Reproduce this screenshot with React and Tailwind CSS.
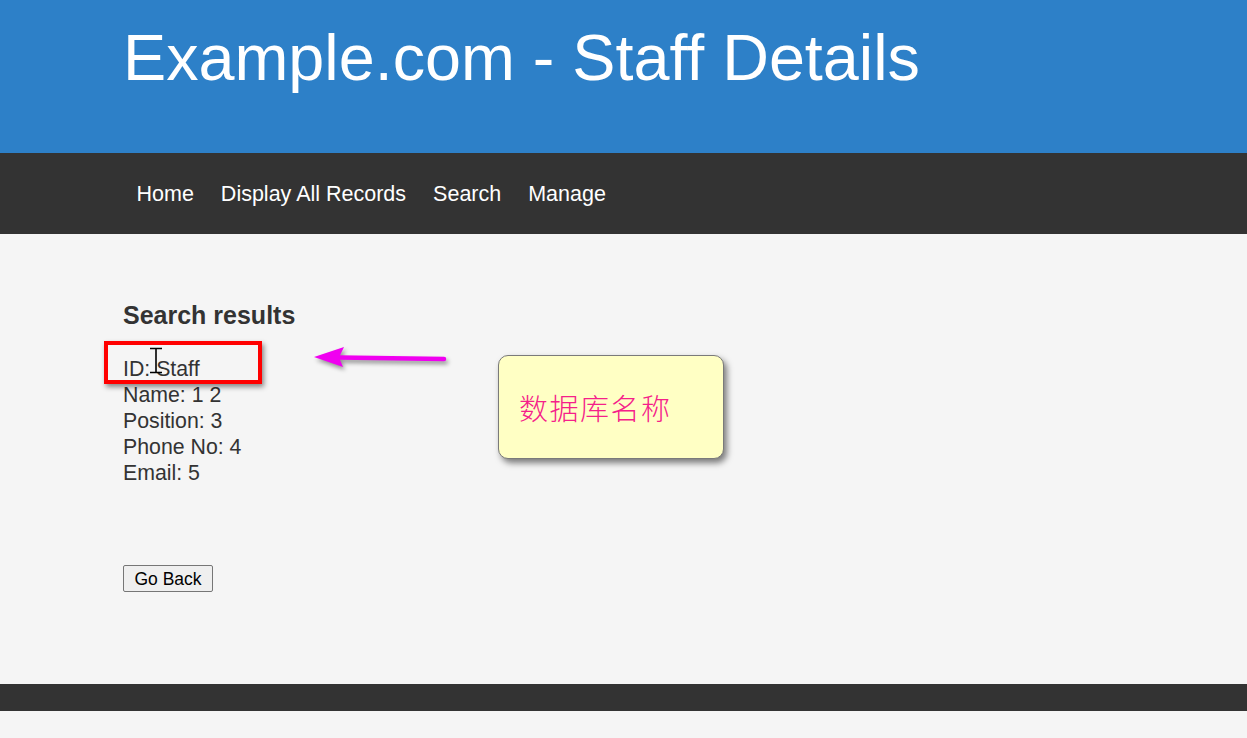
import React from "react";

export default function App() {
  const sans = { fontFamily: '"Liberation Sans", Arial, sans-serif' };
  return (
    <div className="relative min-h-[738px] bg-[#f5f5f5]" style={sans}>
      <header className="h-[153px] bg-[#2d80c8]">
        <div className="mx-auto w-[1001px] pt-[26px]">
          <h1 className="text-[64.7px] leading-[64px] text-white font-normal">Example.com - Staff Details</h1>
        </div>
      </header>
      <nav className="h-[81px] bg-[#333333]">
        <div className="mx-auto flex h-full w-[1001px] items-center">
          {["Home", "Display All Records", "Search", "Manage"].map((t) => (
            <a key={t} className="px-[13.5px] text-[21.5px] leading-[26px] text-white">{t}</a>
          ))}
        </div>
      </nav>
      <main className="h-[450px]">
        <div className="mx-auto w-[1001px] pt-[66px] text-[#333333]">
          <h2 className="text-[25px] leading-[30px] font-bold">Search results</h2>
          <div className="mt-[26px] text-[21.3px] leading-[26px]">
            <div>ID: Staff</div>
            <div>Name: 1 2</div>
            <div>Position: 3</div>
            <div>Phone No: 4</div>
            <div>Email: 5</div>
          </div>
          <button className="mt-[79px] h-[27px] w-[90px] rounded-[2px] border border-[#767676] bg-[#efefef] text-[17.5px] leading-[20px] text-black">
            Go Back
          </button>
        </div>
      </main>
      <footer className="h-[27px] bg-[#333333]" />

      {/* annotations */}
      <div className="absolute left-[104px] top-[341px] h-[43px] w-[158px] border-4 border-[#ff0000] shadow-[2px_3px_5px_rgba(0,0,0,0.45)]" />
      <svg className="absolute left-[146px] top-[344px]" width="20" height="34" viewBox="0 0 20 34">
        <path d="M4 4.5h12M10 4.5v24M4 28.5h12" stroke="#000" strokeWidth="1.6" fill="none" />
      </svg>
      <svg
        className="absolute left-[305px] top-[340px]"
        width="150"
        height="36"
        viewBox="0 0 150 36"
        style={{ filter: "drop-shadow(2px 3px 2px rgba(0,0,0,0.4))" }}
      >
        <path d="M34 17.5 L139 19" stroke="#f000f0" strokeWidth="4.5" strokeLinecap="round" fill="none" />
        <path d="M9 17 L39 7 L34 17.5 L38 27 Z" fill="#f000f0" />
      </svg>
      <div
        className="absolute left-[498px] top-[355px] flex h-[104px] w-[226px] items-center rounded-[10px] border border-[#7a7a7a] bg-[#ffffc4] pl-[20px] shadow-[3px_4px_6px_rgba(0,0,0,0.5)]"
      >
        <span
          className="text-[29px] leading-[34px] text-[#f5208a]"
          style={{ fontFamily: '"Noto Sans CJK SC", "Noto Sans CJK JP", sans-serif', fontWeight: 300, letterSpacing: "1.5px" }}
        >
          数据库名称
        </span>
      </div>
    </div>
  );
}
